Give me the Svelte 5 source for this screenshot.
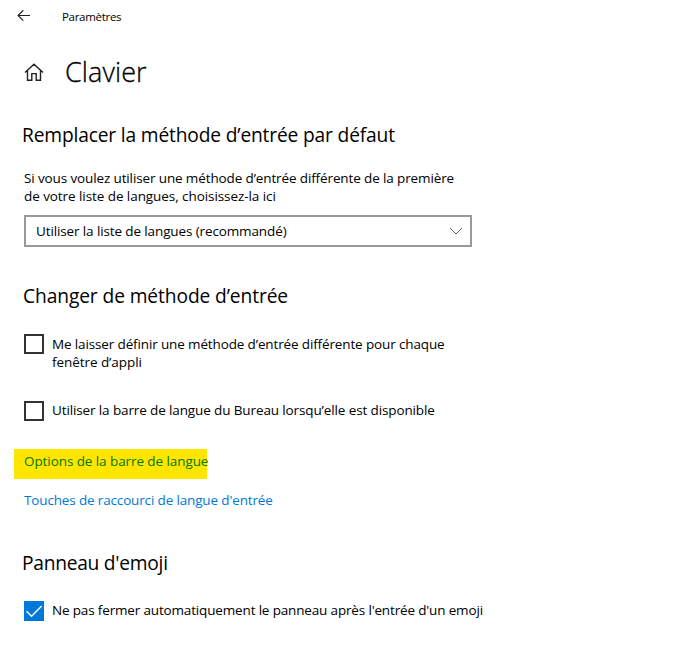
<script>
  let perWindow = $state(false);
  let desktopBar = $state(false);
  let keepOpen = $state(true);
</script>

{#snippet check(on)}
  <span class="box" class:on>
    {#if on}
      <svg width="20" height="20" viewBox="0 0 20 20"><path d="M2.5 10.2 7.6 15.2 17.6 5" /></svg>
    {/if}
  </span>
{/snippet}

<main>
  <header>
    <svg class="back" width="14" height="12" viewBox="0 0 14 12"><path d="M13 5.5H1.2M6.3 .3 1.1 5.5l5.2 5.2" /></svg>
    <span class="app">Paramètres</span>
  </header>

  <div class="title">
    <svg class="home" width="20" height="18" viewBox="0 0 20 18">
      <path d="M1 9.6 10 1.2l9 8.4M3.5 7.8v9.4h4.3v-6.6h4.4v6.6h4.3V7.8" />
    </svg>
    <h1>Clavier</h1>
  </div>

  <section class="s1">
    <h2 class="h-a">Remplacer la méthode d’entrée par défaut</h2>
    <p class="intro"><span class="i-a">Si vous voulez utiliser une méthode d’entrée différente de la première</span><br /><span class="i-b">de votre liste de langues, choisissez-la ici</span></p>
    <div class="select" role="button" tabindex="-1">
      <span class="sel">Utiliser la liste de langues (recommandé)</span>
      <svg width="14" height="8" viewBox="0 0 14 8"><path d="M1 1l6 6 6-6" /></svg>
    </div>
  </section>

  <section class="s2">
    <h2 class="h-b">Changer de méthode d’entrée</h2>
    <button class="row r1" onclick={() => (perWindow = !perWindow)}>
      {@render check(perWindow)}
      <span class="label"><span class="c-a">Me laisser définir une méthode d’entrée différente pour chaque</span><br /><span class="c-b">fenêtre d’appli</span></span>
    </button>
    <button class="row r2" onclick={() => (desktopBar = !desktopBar)}>
      {@render check(desktopBar)}
      <span class="label"><span class="c-c">Utiliser la barre de langue du Bureau lorsqu’elle est disponible</span></span>
    </button>
    <div class="mark"><span class="l-a">Options de la barre de langue</span></div>
    <div class="link"><span class="l-b">Touches de raccourci de langue d'entrée</span></div>
  </section>

  <section class="s3">
    <h2 class="h-c">Panneau d'emoji</h2>
    <button class="row r3" onclick={() => (keepOpen = !keepOpen)}>
      {@render check(keepOpen)}
      <span class="label"><span class="c-d">Ne pas fermer automatiquement le panneau après l'entrée d'un emoji</span></span>
    </button>
  </section>
</main>

<style>
  :global(body) { margin: 0; background: #fff; }
  main {
    box-sizing: border-box;
    width: 677px;
    height: 659px;
    padding-left: 24px;
    overflow: hidden;
    color: #000;
    background: #fff;
    font: 13.5px/18px "Open Sans", "Noto Sans", sans-serif;
    white-space: nowrap;
  }
  svg { display: block; fill: none; stroke: #222; stroke-width: 1.2; flex: none; }
  header { display: flex; align-items: center; height: 32px; margin-left: -7px; }
  .app { margin-left: 31px; padding-top: 2px; font-size: 11.5px; letter-spacing: -0.3px; }
  .title { display: flex; align-items: center; height: 80px; }
  .home { stroke-width: 1.4; }
  h1 {
    margin: 0 0 0 21px;
    font-size: 27px;
    line-height: 36px;
    font-weight: 300;
    letter-spacing: 0.1px;
    -webkit-text-stroke: 0.3px #000;
  }
  h2 { margin: 0 0 0 -2px; font-size: 19.2px; line-height: 28px; font-weight: 400; }
  .h-a { letter-spacing: -0.16px; }
  .h-b { margin-left: -1px; letter-spacing: -0.1px; }
  .h-c { letter-spacing: -0.26px; }
  .i-a { letter-spacing: -0.125px; }
  .i-b { letter-spacing: -0.07px; }
  .sel { letter-spacing: -0.12px; }
  .c-a { letter-spacing: -0.135px; }
  .c-b { letter-spacing: -0.06px; }
  .c-c { letter-spacing: -0.12px; }
  .c-d { letter-spacing: -0.16px; }
  .l-a { letter-spacing: -0.08px; }
  .l-b { letter-spacing: -0.15px; }
  .s1 { padding-top: 9px; }
  .intro { margin: 20px 0 10px; }
  .select {
    box-sizing: border-box;
    display: flex;
    align-items: center;
    justify-content: space-between;
    width: 448px;
    height: 32px;
    padding: 0 7px 0 10px;
    border: 2px solid #999;
  }
  .select svg { stroke: #666; stroke-width: 1; }
  .s2 { padding-top: 35px; }
  .row {
    display: flex;
    align-items: flex-start;
    width: 600px;
    padding: 0;
    border: 0;
    background: none;
    color: inherit;
    font: inherit;
    text-align: left;
  }
  .box { box-sizing: border-box; width: 20px; height: 20px; border: 2px solid #333; flex: none; }
  .box.on { border: 0; background: #0078d7; }
  .box svg { stroke: #fff; stroke-width: 1.4; }
  .label { margin-left: 8px; padding-top: 1px; }
  .r2 .label, .r3 .label { padding-top: 0; }
  .r1 { margin-top: 24px; }
  .r2 { margin-top: 30px; }
  .mark {
    box-sizing: border-box;
    width: 193px;
    height: 30px;
    margin: 28px 0 0 -10px;
    padding: 3px 0 0 10px;
    background: #ffe600;
    color: #007800;
  }
  .link { margin-top: 12px; color: #0078d7; }
  .s3 { padding-top: 40px; }
  .r3 { margin-top: 24px; }
</style>
